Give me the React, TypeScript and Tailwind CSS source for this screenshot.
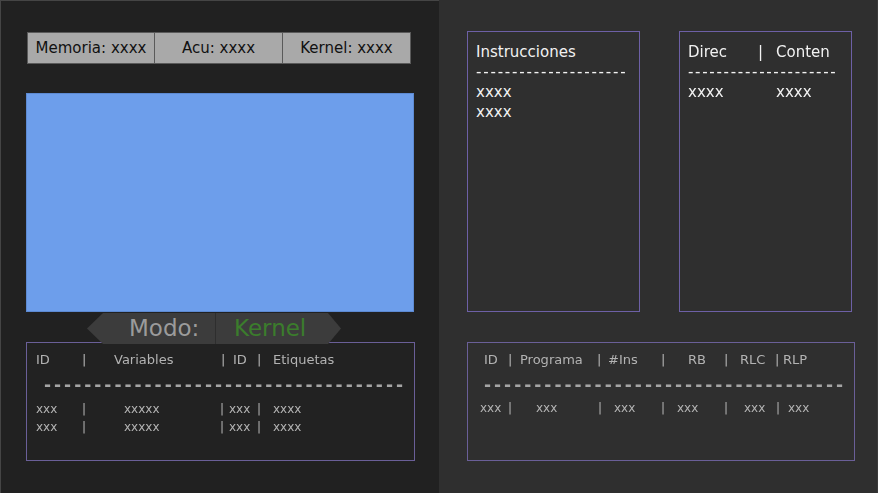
import React from 'react';

type Cell = { t: string; w?: string };

const Row: React.FC<{ cells: Cell[]; className?: string }> = ({ cells, className }) => (
  <div className={`flex whitespace-pre will-change-transform ${className ?? ''}`}>
    {cells.map((c, i) => (
      <span key={i} className={`shrink-0 ${c.w ?? ''}`}>
        {c.t}
      </span>
    ))}
  </div>
);

const leftHeader: Cell[] = [
  { t: 'ID', w: 'w-[46px]' },
  { t: '|', w: 'w-[32px]' },
  { t: 'Variables', w: 'w-[107px]' },
  { t: '|', w: 'w-[12px]' },
  { t: 'ID', w: 'w-[24px]' },
  { t: '|', w: 'w-[16px]' },
  { t: 'Etiquetas' },
];

const leftRow: Cell[] = [
  { t: 'xxx', w: 'w-[46px]' },
  { t: '|', w: 'w-[42px]' },
  { t: 'xxxxx', w: 'w-[96px]' },
  { t: '|', w: 'w-[9px]' },
  { t: 'xxx', w: 'w-[28px]' },
  { t: '|', w: 'w-[16px]' },
  { t: 'xxxx' },
];

const rightHeader: Cell[] = [
  { t: 'ID', w: 'w-[24px]' },
  { t: '|', w: 'w-[12px]' },
  { t: 'Programa', w: 'w-[77px]' },
  { t: '|', w: 'w-[11px]' },
  { t: '#Ins', w: 'w-[53px]' },
  { t: '|', w: 'w-[27px]' },
  { t: 'RB', w: 'w-[36px]' },
  { t: '|', w: 'w-[16px]' },
  { t: 'RLC', w: 'w-[35px]' },
  { t: '|', w: 'w-[8px]' },
  { t: 'RLP' },
];

const rightRow: Cell[] = [
  { t: 'xxx', w: 'w-[28px]' },
  { t: '|', w: 'w-[28px]' },
  { t: 'xxx', w: 'w-[62px]' },
  { t: '|', w: 'w-[16px]' },
  { t: 'xxx', w: 'w-[47px]' },
  { t: '|', w: 'w-[16px]' },
  { t: 'xxx', w: 'w-[47px]' },
  { t: '|', w: 'w-[20px]' },
  { t: 'xxx', w: 'w-[32px]' },
  { t: '|', w: 'w-[12px]' },
  { t: 'xxx' },
];

const tableDashes = '-'.repeat(36);
const boxDashes = '-'.repeat(21);

const App: React.FC = () => {
  return (
    <div className="w-[878px] h-[493px] flex overflow-hidden font-['DejaVu_Sans',sans-serif]">
      {/* left side */}
      <div className="w-[439px] h-full bg-[#212121] border-l border-t border-[#454545] pt-[31px] pl-[25px] flex flex-col">
        <div className="flex h-[32px] w-[384px] ml-[1px]">
          <div className="w-[128px] bg-[#a9a9a9] border border-[#5a5a5a] flex items-center justify-center text-[15px] text-[#111]">
            Memoria: xxxx
          </div>
          <div className="w-[128px] bg-[#a9a9a9] border-y border-r border-[#5a5a5a] flex items-center justify-center text-[15px] text-[#111]">
            Acu: xxxx
          </div>
          <div className="w-[128px] bg-[#a9a9a9] border-y border-r border-[#5a5a5a] flex items-center justify-center text-[15px] text-[#111]">
            Kernel: xxxx
          </div>
        </div>

        <div className="mt-[29px] w-[388px] h-[219px] bg-[#6d9eeb] border border-[#5d8ad2]" />

        <div className="relative mt-[30px]">
          <div className="absolute left-[61px] top-[-29px] z-10 w-[254px] h-[31px] bg-[#3c3c3c] [clip-path:polygon(16px_0,241px_0,254px_50%,241px_100%,16px_100%,0_50%)] flex text-[23px] leading-[31px]">
            <div className="w-[129px] pl-[42px] text-[#9b9b9b] border-r border-[#2e2e2e]">Modo:</div>
            <div className="pl-[18px] text-[#3b7d2c]">Kernel</div>
          </div>

          <div className="w-[389px] h-[119px] border border-[#6a5f98] bg-[#222] pl-[9px] pt-[8px] text-[#b3b3b3]">
            <Row cells={leftHeader} className="text-[13px] leading-[18px]" />
            <div className="mt-[6px] ml-[8px] text-[17px] font-bold leading-[20px] tracking-[3px] text-[#a5a5a5] whitespace-pre will-change-transform">
              {tableDashes}
            </div>
            <Row cells={leftRow} className="mt-[5px] text-[12px] leading-[18px]" />
            <Row cells={leftRow} className="text-[12px] leading-[18px]" />
          </div>
        </div>
      </div>

      {/* right side */}
      <div className="flex-1 h-full bg-[#2f2f2f] border-r border-[#3a3a3a] pt-[31px] pl-[28px] flex flex-col">
        <div className="flex gap-[39px]">
          <div className="w-[173px] h-[281px] border border-[#6d60a6] pl-[8px] pt-[10px] text-[15px] leading-[20px] text-[#f2f2f2]">
            <div>Instrucciones</div>
            <div className="tracking-[1.8px] whitespace-pre will-change-transform">{boxDashes}</div>
            <div>xxxx</div>
            <div>xxxx</div>
          </div>
          <div className="w-[173px] h-[281px] border border-[#6d60a6] pl-[8px] pt-[10px] text-[15px] leading-[20px] text-[#f2f2f2]">
            <Row cells={[{ t: 'Direc', w: 'w-[70px]' }, { t: '|', w: 'w-[18px]' }, { t: 'Conten' }]} />
            <div className="tracking-[1.7px] whitespace-pre will-change-transform">{boxDashes}</div>
            <Row cells={[{ t: 'xxxx', w: 'w-[88px]' }, { t: 'xxxx' }]} />
          </div>
        </div>

        <div className="mt-[30px] w-[388px] h-[119px] border border-[#6a5f98] pt-[8px] text-[#b3b3b3]">
          <Row cells={rightHeader} className="pl-[16px] text-[13px] leading-[18px]" />
          <div className="mt-[6px] pl-[16px] text-[17px] font-bold leading-[20px] tracking-[3px] text-[#a5a5a5] whitespace-pre will-change-transform">
            {tableDashes}
          </div>
          <Row cells={rightRow} className="mt-[4px] pl-[12px] text-[12px] leading-[18px]" />
        </div>
      </div>
    </div>
  );
};

export default App;
